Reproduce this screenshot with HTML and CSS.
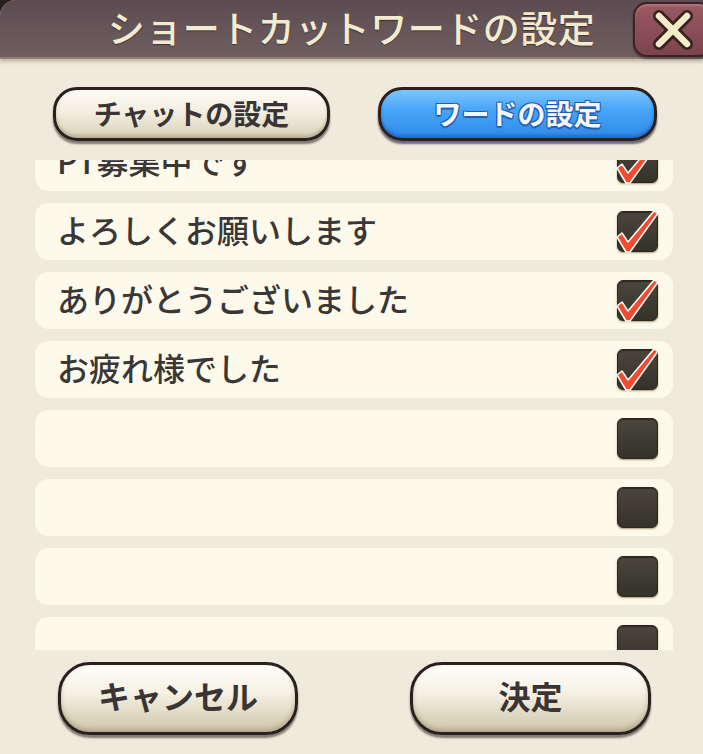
FILE: index.html
```html
<!DOCTYPE html>
<html lang="ja">
<head>
<meta charset="utf-8">
<title>ショートカットワードの設定</title>
<link rel="stylesheet" href="styles.css">
</head>
<body>
<div class="dialog">
  <div class="header">
    <h1 class="title">ショートカットワードの設定</h1>
  </div>
  <button class="close" aria-label="閉じる">
    <svg width="42" height="42" viewBox="0 0 42 42">
      <g stroke-linecap="round">
        <line x1="7" y1="7" x2="35" y2="35" stroke="#3a2220" stroke-width="12"/>
        <line x1="35" y1="7" x2="7" y2="35" stroke="#3a2220" stroke-width="12"/>
        <line x1="7" y1="7" x2="35" y2="35" stroke="#f3ecc9" stroke-width="6.5"/>
        <line x1="35" y1="7" x2="7" y2="35" stroke="#f3ecc9" stroke-width="6.5"/>
      </g>
    </svg>
  </button>

  <div class="tabs">
    <button class="tab">チャットの設定</button>
    <button class="tab tab-active">ワードの設定</button>
  </div>

  <div class="list">
    <div class="list-inner">
      <div class="row"><span class="word">PT募集中です</span><span class="box checked"><svg class="check" width="41" height="41" viewBox="0 0 41 41"><polygon points="0,26 5,22 11,31 37,0 41,2 13,41 9,41" fill="#f24b2f" stroke="#fff" stroke-width="1.5" stroke-linejoin="round"/></svg></span></div>
      <div class="row"><span class="word">よろしくお願いします</span><span class="box checked"><svg class="check" width="41" height="41" viewBox="0 0 41 41"><polygon points="0,26 5,22 11,31 37,0 41,2 13,41 9,41" fill="#f24b2f" stroke="#fff" stroke-width="1.5" stroke-linejoin="round"/></svg></span></div>
      <div class="row"><span class="word">ありがとうございました</span><span class="box checked"><svg class="check" width="41" height="41" viewBox="0 0 41 41"><polygon points="0,26 5,22 11,31 37,0 41,2 13,41 9,41" fill="#f24b2f" stroke="#fff" stroke-width="1.5" stroke-linejoin="round"/></svg></span></div>
      <div class="row"><span class="word">お疲れ様でした</span><span class="box checked"><svg class="check" width="41" height="41" viewBox="0 0 41 41"><polygon points="0,26 5,22 11,31 37,0 41,2 13,41 9,41" fill="#f24b2f" stroke="#fff" stroke-width="1.5" stroke-linejoin="round"/></svg></span></div>
      <div class="row"><span class="word"></span><span class="box"></span></div>
      <div class="row"><span class="word"></span><span class="box"></span></div>
      <div class="row"><span class="word"></span><span class="box"></span></div>
      <div class="row"><span class="word"></span><span class="box"></span></div>
    </div>
  </div>

  <div class="footer">
    <button class="btn">キャンセル</button>
    <button class="btn">決定</button>
  </div>
</div>
</body>
</html>
```
FILE: styles.css
```css
html, body {
  margin: 0;
  padding: 0;
  background: #2a2020;
}
body {
  font-family: "Noto Sans CJK JP", "Noto Sans", sans-serif;
  width: 703px;
  height: 754px;
  overflow: hidden;
}
button {
  font-family: inherit;
  cursor: pointer;
}
.dialog {
  position: relative;
  width: 703px;
  height: 754px;
  background: #efeadb;
  border-radius: 16px 0 0 0;
  overflow: hidden;
  display: flex;
  flex-direction: column;
}
.header {
  height: 57px;
  flex: none;
  background: linear-gradient(#5c4b50, #6f5e61);
  border-bottom: 2px solid #8f7f78;
  box-shadow: 0 3px 3px rgba(150, 130, 110, 0.45);
  display: flex;
  align-items: center;
  justify-content: center;
}
.title {
  margin: 0;
  font-size: 37px;
  font-weight: 500;
  color: #f3ebcf;
  letter-spacing: 0.5px;
  line-height: 1;
  padding-bottom: 2px;
  text-shadow: 0 1px 1px rgba(40, 25, 25, 0.6);
}
.close {
  position: absolute;
  top: 2px;
  left: 633px;
  width: 80px;
  height: 55px;
  padding: 0 0 0 17px;
  border: 2px solid #3a2226;
  border-radius: 14px;
  background: linear-gradient(#9a5a62, #7c434b);
  box-shadow: inset 0 2px 2px rgba(255, 200, 200, 0.25), 0 2px 2px rgba(40, 20, 20, 0.5);
  display: flex;
  align-items: center;
}
.tabs {
  flex: none;
  display: flex;
  gap: 48px;
  padding: 28px 0 0 53px;
  height: 56px;
}
.tab {
  width: 277px;
  height: 54px;
  border: 3px solid #2b2020;
  border-radius: 24px;
  background: linear-gradient(#fdfbf3 0%, #f3eee0 45%, #d9d1b9 100%);
  box-shadow: 0 3px 2px rgba(40, 30, 30, 0.55), inset 0 -3px 3px rgba(160, 145, 110, 0.5);
  font-size: 28px;
  font-weight: 700;
  color: #3b3434;
  line-height: 1;
  padding: 0 0 3px;
}
.tab-active {
  width: 279px;
  background: linear-gradient(#7cc6ff 0%, #49a6f8 40%, #2e8ae8 100%);
  color: #f4f6ff;
  text-shadow: -1px -1px 0 #1f5fb0, 1px -1px 0 #1f5fb0, -1px 1px 0 #1f5fb0, 1px 1px 0 #1f5fb0, 0 2px 1px #1f5fb0;
  box-shadow: 0 3px 2px rgba(20, 20, 40, 0.6), inset 0 -3px 3px rgba(20, 80, 170, 0.5);
}
.list {
  flex: none;
  margin: 17px 30px 0 35px;
  height: 490px;
  overflow: hidden;
}
.list-inner {
  margin-top: -26px;
  display: flex;
  flex-direction: column;
  gap: 12px;
}
.row {
  height: 57px;
  flex: none;
  background: #fefaeb;
  border-radius: 14px;
  display: flex;
  align-items: center;
  justify-content: space-between;
  padding: 0 15px 0 22px;
}
.word {
  font-size: 32px;
  font-weight: 500;
  color: #393737;
  line-height: 1;
  padding-bottom: 5px;
}
.box {
  position: relative;
  width: 39px;
  height: 39px;
  border: 1px solid #2a2620;
  border-radius: 6px;
  background: linear-gradient(#4a463c, #35322a);
  box-shadow: 0 1px 2px rgba(140, 115, 70, 0.7), inset 0 1px 1px rgba(0, 0, 0, 0.4);
}
.check {
  position: absolute;
  left: -1px;
  top: -1px;
  overflow: visible;
}
.footer {
  flex: none;
  display: flex;
  gap: 112px;
  padding: 12px 0 0 58px;
}
.btn {
  width: 240px;
  height: 73px;
  border: 3px solid #2b2020;
  border-radius: 32px;
  background: linear-gradient(#fefdf8 0%, #f6f2e6 40%, #e2dbc6 70%, #cfc6ad 100%);
  box-shadow: 0 3px 2px rgba(40, 30, 30, 0.55), inset 0 -3px 4px rgba(150, 135, 100, 0.5);
  font-size: 32px;
  font-weight: 700;
  color: #3b3434;
  line-height: 1;
  padding: 0 0 7px;
}
.btn + .btn {
  width: 241px;
}
```
